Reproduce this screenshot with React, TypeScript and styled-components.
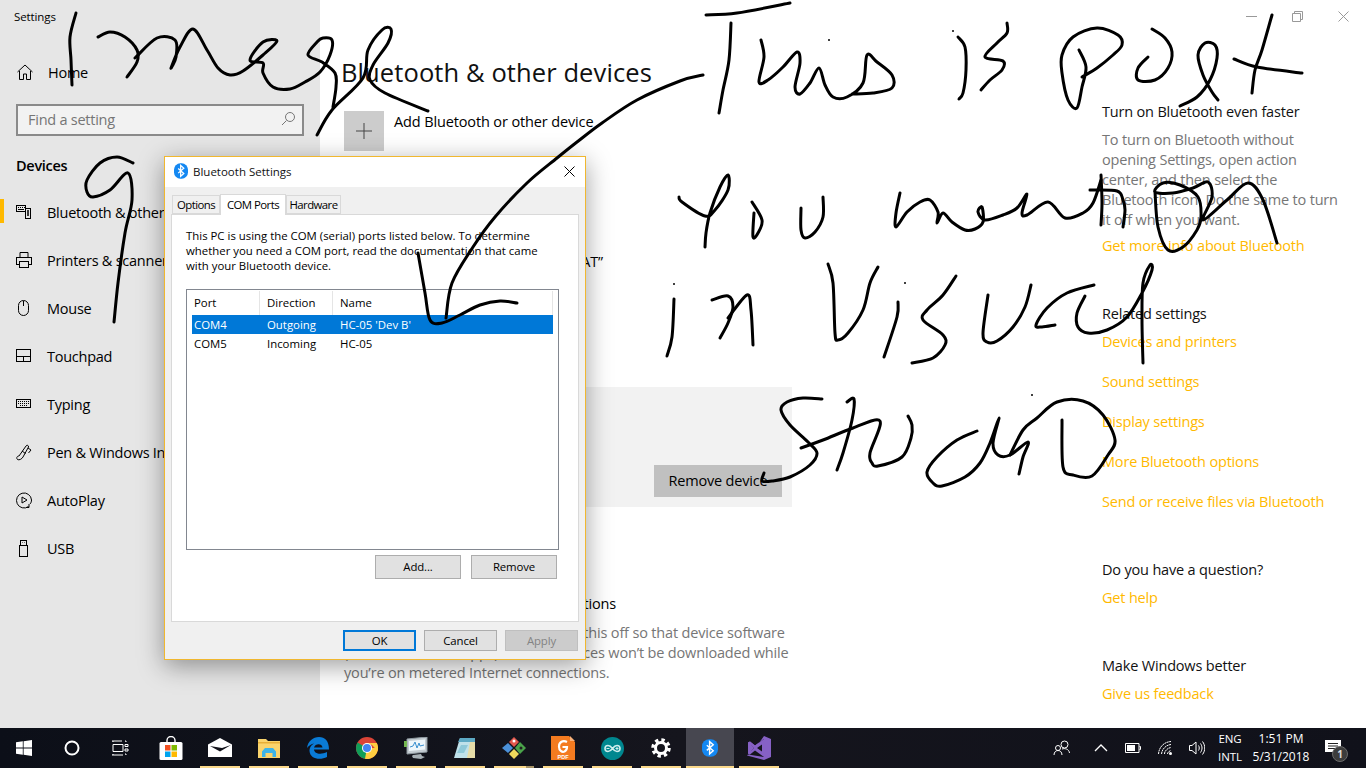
import React from "react";
import styled, { createGlobalStyle } from "styled-components";

const FONT = `"Open Sans", "Noto Sans", "Liberation Sans", sans-serif`;
const ACCENT = "#ffb900";

const Global = createGlobalStyle`
  html, body { margin: 0; padding: 0; background: #fff; }
  body { font-family: ${FONT}; color: #000; }
  * { box-sizing: border-box; }
`;

const Page = styled.div`position: relative; width: 1366px; height: 768px; overflow: hidden; display: flex; flex-direction: column;`;
const Desktop = styled.div`display: flex; height: 728px; flex: none;`;

/* ---------- sidebar ---------- */
const Sidebar = styled.aside`width: 320px; flex: none; background: #e6e6e6; display: flex; flex-direction: column;`;
const AppTitle = styled.div`font-size: 11.5px; line-height: 16px; padding: 9px 0 0 14px; height: 48px; letter-spacing: -0.1px;`;
const HomeRow = styled.div`height: 48px; display: flex; align-items: center; padding-left: 17px; font-size: 14.5px; letter-spacing: -0.25px; gap: 15px;`;
const SearchBox = styled.div`margin: 8px 16px 0; height: 32px; border: 2px solid #8a8a8a; background: #f2f2f2; display: flex; align-items: center; justify-content: space-between; padding: 0 6px 2px 10px; color: #767676; font-size: 14.5px; letter-spacing: -0.25px;`;
const GroupTitle = styled.div`margin: 19px 0 0 16px; height: 22px; line-height: 22px; font-size: 14.5px; font-weight: 600; letter-spacing: -0.3px;`;
const NavList = styled.nav`margin-top: 11px; display: flex; flex-direction: column;`;
const NavItem = styled.div<{ $on?: boolean }>`
  position: relative; height: 48px; display: flex; align-items: center; padding-left: 16px; gap: 15px; font-size: 14.5px; letter-spacing: -0.25px; white-space: nowrap;
  &::before { content: ""; display: ${p => (p.$on ? "block" : "none")}; position: absolute; left: 0; top: 11px; width: 4px; height: 24px; background: ${ACCENT}; }
`;
const NavIcon = styled.svg`width: 16px; height: 18px; flex: none; fill: none; stroke: #000; stroke-width: 1;`;
const SearchIcon = styled(NavIcon)`stroke: #767676;`;

/* ---------- main ---------- */
const Main = styled.main`flex: 1; background: #fff; display: flex; flex-direction: column; min-width: 0;`;
const WindowBar = styled.div`height: 32px; display: flex; justify-content: flex-end; flex: none;`;
const WinButton = styled.div`width: 46px; height: 32px; display: flex; align-items: center; justify-content: center;`;
const Columns = styled.div`display: flex; flex: 1; min-height: 0;`;
const Content = styled.div`width: 782px; flex: none; padding-left: 22px;`;
const Rail = styled.div`flex: 1; padding-top: 70px; font-size: 14.5px; letter-spacing: -0.18px;`;

const Heading = styled.h1`margin: 18px 0 0 -1px; font-weight: 400; font-size: 25.5px; line-height: 44px; letter-spacing: 0.1px; color: #111;`;
const AddRow = styled.div`display: flex; gap: 10px; margin: 17px 0 0 2px; height: 40px; font-size: 14.5px; letter-spacing: -0.13px; line-height: 22px;`;
const AddTile = styled.div`width: 40px; height: 40px; background: #cccccc; display: flex; align-items: center; justify-content: center;`;
const Discover = styled.div`margin: 100px 0 0 2px; width: 259px; display: flex; justify-content: flex-end; height: 22px; line-height: 22px; font-size: 14.5px; letter-spacing: -0.15px; white-space: nowrap;`;
const DevicePanel = styled.div`margin: 114px 0 0 2px; width: 448px; height: 120px; background: #f2f2f2; display: flex; justify-content: flex-end; align-items: flex-end; padding: 0 10px 10px 0;`;
const RemoveDevice = styled.div`width: 128px; height: 32px; background: #c0c0c0; font-size: 14.5px; letter-spacing: -0.2px; padding-bottom: 2px; display: flex; align-items: center; justify-content: center;`;
const MeterTitle = styled.div`margin: 86px 0 0 2px; width: 272px; display: flex; justify-content: flex-end; height: 22px; line-height: 22px; font-size: 14.5px; letter-spacing: -0.15px; white-space: nowrap;`;
const MeterText = styled.p`margin: 8px 0 0 2px; width: 448px; font-size: 14.5px; line-height: 20px; letter-spacing: -0.17px; color: #767676; white-space: nowrap;`;

const RailTitle = styled.div<{ $gap: number }>`margin-top: ${p => p.$gap}px; height: 20px; line-height: 20px; color: #111;`;
const RailText = styled.p`margin: 8px 0 0; line-height: 20px; color: #767676; white-space: nowrap;`;
const RailLink = styled.div<{ $gap: number }>`margin-top: ${p => p.$gap}px; height: 20px; line-height: 20px; color: ${ACCENT}; white-space: nowrap;`;

/* ---------- dialog ---------- */
const Dialog = styled.div`
  position: absolute; left: 164px; top: 156px; width: 422px; height: 504px; background: #f0f0f0; border: 1px solid #f0b72f;
  box-shadow: 0 6px 24px rgba(0,0,0,.38); display: flex; flex-direction: column; font-size: 11.4px; color: #000;
`;
const DialogTitle = styled.div`height: 30px; background: #fff; display: flex; align-items: center; padding: 0 10px 2px 9px; gap: 5px; font-size: 11.5px; flex: none; color: #111;`;
const TitleText = styled.span`flex: 1;`;
const TabStrip = styled.div`display: flex; align-items: flex-end; height: 27px; padding-left: 7px; flex: none;`;
const Tab = styled.div<{ $on?: boolean; $w: number }>`
  width: ${p => p.$w}px; height: ${p => (p.$on ? 21 : 19)}px; margin-bottom: ${p => (p.$on ? -1 : 0)}px; position: relative; z-index: ${p => (p.$on ? 2 : 1)};
  background: ${p => (p.$on ? "#fff" : "#f0f0f0")}; border: 1px solid #d9d9d9; border-bottom: ${p => (p.$on ? "none" : "1px solid #d9d9d9")};
  display: flex; align-items: center; justify-content: center; padding-bottom: 1px; white-space: nowrap; letter-spacing: -0.55px;
`;
const TabPanel = styled.div`margin: 0 6px 0 6px; height: 408px; background: #fff; border: 1px solid #d9d9d9; padding: 13px 20px 0 14px; flex: none; display: flex; flex-direction: column;`;
const Intro = styled.p`margin: 0; line-height: 15px; white-space: nowrap;`;
const ListView = styled.div`margin-top: 16px; height: 261px; width: 373px; border: 1px solid #828790; padding: 1px 5px 0 5px;`;
const ListHead = styled.div`display: grid; grid-template-columns: 68px 73px 220px; height: 24px; align-items: center;`;
const HeadCell = styled.div`height: 24px; line-height: 23px; padding-left: 7px; border-right: 1px solid #e5e5e5; &:first-child { padding-left: 2px; }`;
const ListRow = styled.div<{ $on?: boolean }>`
  display: grid; grid-template-columns: 68px 73px 220px; height: 19px; line-height: 19px; width: 361px;
  background: ${p => (p.$on ? "#0078d7" : "transparent")}; color: ${p => (p.$on ? "#fff" : "#000")};
`;
const Cell = styled.div`padding-left: 7px; &:first-child { padding-left: 2px; }`;
const ListButtons = styled.div`display: flex; justify-content: flex-end; gap: 10px; margin-top: 5px; width: 371px;`;
const PanelButton = styled.div<{ $w: number }>`width: ${p => p.$w}px; height: 24px; background: #e1e1e1; border: 1px solid #adadad; padding-bottom: 2px; letter-spacing: -0.12px; display: flex; align-items: center; justify-content: center;`;
const DialogFoot = styled.div`display: flex; justify-content: flex-end; gap: 8px; padding: 8px 7px 0 0;`;
const FootButton = styled.div<{ $kind?: "default" | "disabled" }>`
  width: 73px; height: 21px; display: flex; align-items: center; justify-content: center; letter-spacing: -0.12px;
  background: ${p => (p.$kind === "disabled" ? "#cccccc" : "#e1e1e1")};
  color: ${p => (p.$kind === "disabled" ? "#838383" : "#000")};
  border: ${p => (p.$kind === "default" ? "2px solid #0078d7" : p.$kind === "disabled" ? "1px solid #bfbfbf" : "1px solid #adadad")};
`;

/* ---------- ink ---------- */
const InkLayer = styled.svg`position: absolute; left: 0; top: 0; width: 1366px; height: 728px; pointer-events: none; fill: none; stroke: #000; stroke-width: 3; stroke-linecap: round; stroke-linejoin: round;`;

/* ---------- taskbar ---------- */
const Taskbar = styled.footer`height: 40px; flex: none; display: flex; background: linear-gradient(90deg, #0c0f18, #15151d 50%, #10111a); color: #fff;`;
const TaskLeft = styled.div`display: flex; flex: 1;`;
const ShellButton = styled.div<{ $gap?: number }>`width: 48px; height: 40px; display: flex; align-items: center; justify-content: center; margin-right: ${p => p.$gap || 0}px;`;
const AppButton = styled.div<{ $running?: boolean; $active?: boolean; $split?: boolean }>`
  position: relative; width: 48px; height: 40px; margin-right: 1px; display: flex; align-items: center; justify-content: center;
  background: ${p => (p.$active ? "#474750" : "transparent")};
  &::after { content: ""; display: ${p => (p.$running ? "block" : "none")}; position: absolute; bottom: 0; left: ${p => (p.$active ? 0 : 4)}px; right: ${p => (p.$active ? 0 : 4)}px; height: 2px;
    background: ${p => (p.$split ? "linear-gradient(90deg,#fbd98b 80%,#a89468 80%)" : "#fbd98b")}; }
`;
const Tray = styled.div`display: flex; flex: none; padding-right: 14px;`;
const TraySlot = styled.div<{ $w: number }>`position: relative; width: ${p => p.$w}px; height: 40px; display: flex; flex-direction: column; align-items: center; justify-content: center; font-size: 11.5px; line-height: 18px; letter-spacing: -0.1px; white-space: nowrap;`;
const ClockSlot = styled(TraySlot)`font-size: 12px; letter-spacing: 0;`;
const NoteGlyph = styled.svg`position: absolute; left: 11px; top: 12px;`;
const Badge = styled.div`position: absolute; left: 18px; top: 18px; width: 16px; height: 16px; border-radius: 50%; background: #3c3c3c; border: 1px solid #6b6b6b; font-size: 10px; font-weight: 700; line-height: 14px; text-align: center; color: #ddd;`;

/* ---------- data ---------- */
type P = [number, number];
const smooth = (pts: P[]) => {
  let d = `M${pts[0][0]} ${pts[0][1]}`;
  for (let i = 0; i < pts.length - 1; i++) {
    const a = pts[Math.max(0, i - 1)], b = pts[i], c = pts[i + 1], e = pts[Math.min(pts.length - 1, i + 2)];
    d += ` C${(b[0] + (c[0] - a[0]) / 6).toFixed(1)} ${(b[1] + (c[1] - a[1]) / 6).toFixed(1)} ${(c[0] - (e[0] - b[0]) / 6).toFixed(1)} ${(c[1] - (e[1] - b[1]) / 6).toFixed(1)} ${c[0]} ${c[1]}`;
  }
  return d;
};
const strokes: P[][] = [
  [[76,13],[70,37],[71,60],[72,85]],
  [[98,37],[110,32],[125,37],[137,50],[137,62],[127,77]],
  [[135,58],[157,38],[175,40],[176,57],[171,68],[180,47],[193,29],[207,50],[218,68],[230,75],[243,71],[263,55],[277,41],[263,42],[250,60],[263,63],[263,73],[273,87],[290,89],[305,82],[320,72],[330,55],[332,40],[323,38],[317,42],[308,55],[322,62],[335,73],[336,87],[333,107]],
  [[317,135],[332,110],[363,78],[368,50],[382,30],[391,29],[388,43],[373,65],[370,80],[385,93],[428,111]],
  [[703,75],[680,81],[637,100],[602,123],[577,142],[557,158],[527,183],[495,217],[473,247],[452,283],[446,318]],
  [[418,253],[425,293],[430,320],[442,323],[460,315],[480,305],[500,301],[517,303]],
  [[706,15],[737,13],[790,3]],
  [[731,23],[729,60],[723,90],[719,113]],
  [[761,40],[764,57],[759,82],[768,80],[783,67],[797,52],[800,63],[795,87],[800,94],[810,83],[819,68],[825,85],[833,97],[847,97],[863,83],[867,55],[877,62],[892,75],[892,88],[873,93],[852,94]],
  [[958,37],[965,47],[966,70],[963,93],[959,99]],
  [[1007,23],[1007,33],[997,43],[985,57],[1003,61],[1002,70],[990,80],[981,90]],
  [[1079,50],[1086,67],[1082,87],[1077,108],[1068,100],[1062,73],[1062,55],[1073,37],[1097,28],[1118,35],[1122,45],[1113,55],[1097,68],[1082,77]],
  [[1152,29],[1165,38],[1172,52],[1168,68],[1155,80],[1138,80],[1138,68],[1148,57]],
  [[1180,106],[1197,97],[1210,80],[1217,58],[1215,45],[1205,43],[1198,55],[1203,75],[1212,92],[1218,100]],
  [[1272,15],[1262,50],[1255,70],[1252,93]],
  [[1234,59],[1257,67],[1302,73]],
  [[679,197],[682,202],[705,216],[715,210],[728,190],[728,175],[720,187],[710,213],[706,233],[705,247]],
  [[752,202],[762,220],[758,233],[753,237],[754,213]],
  [[801,208],[801,230],[805,238],[815,232],[823,217],[823,197]],
  [[900,193],[896,213],[896,227],[907,212],[920,202],[930,200],[938,212],[937,223],[943,213],[952,222],[965,230],[975,229],[983,222],[982,207],[978,212],[985,220],[1003,215],[1017,208],[1027,194],[1022,213],[1027,215],[1048,202],[1065,218],[1083,213],[1093,203],[1101,180]],
  [[1101,175],[1102,203],[1101,225]],
  [[1090,190],[1117,191],[1123,200],[1125,210],[1123,227]],
  [[1155,192],[1158,227],[1168,250],[1183,247],[1197,230],[1201,217],[1198,197],[1180,185],[1163,183],[1155,192],[1173,193],[1193,188],[1208,182],[1212,197],[1203,220],[1227,200],[1248,183],[1263,200],[1277,243]],
  [[674,299],[672,337],[667,356]],
  [[712,300],[728,296],[733,307],[728,323],[720,338]],
  [[728,318],[747,295],[751,310],[753,345]],
  [[828,264],[833,283],[835,333],[838,340],[848,333],[863,310],[870,283],[878,267]],
  [[898,302],[897,317],[884,357]],
  [[956,276],[943,295],[927,310],[923,320],[943,335],[945,345],[933,358],[912,363]],
  [[988,295],[983,333],[987,342],[997,341],[1013,327],[1025,307],[1031,285]],
  [[1094,285],[1067,293],[1047,308],[1036,325],[1042,327],[1055,325]],
  [[1085,296],[1077,313],[1078,327],[1088,333],[1107,330],[1127,317],[1142,293],[1152,270],[1150,265],[1143,283],[1142,320],[1143,363]],
  [[822,399],[803,398],[787,402],[781,410],[790,425],[808,442],[817,453],[810,465],[790,477],[772,481],[762,481],[764,473]],
  [[847,402],[854,399],[852,420],[843,453],[837,470]],
  [[801,448],[823,440],[853,428],[880,421],[870,453],[872,463],[878,466],[902,457],[911,438],[912,425],[908,416]],
  [[977,431],[957,440],[937,457],[927,472],[933,483],[942,486],[965,477],[980,463],[990,443],[999,418],[993,443],[998,455],[1010,455],[1028,442],[1023,457],[1019,474]],
  [[1010,455],[1023,430],[1037,418],[1057,402],[1083,401],[1103,415],[1115,440],[1108,455],[1092,476],[1073,475],[1063,467],[1062,420]],
  [[133,163],[117,157],[100,163],[87,180],[87,192],[93,197],[110,190],[128,173],[132,200],[125,233],[118,283],[114,322]],
];
const dots: P[] = [[829,40],[953,31],[674,284],[905,283],[1032,395]];

const navIcons: Record<string, React.ReactNode> = {
  bt: <><rect x="0.5" y="2.5" width="9" height="6" /><path d="M2 4.5h1M4 4.5h1M6 4.5h1M8 4.5h1M2 6.5h6" /><rect x="9.5" y="5.5" width="5" height="10" fill="#e6e6e6" /><path d="M11 8h2M11 10h2M11 12h2" strokeWidth="1.5" /></>,
  printer: <><path d="M4 6V1.5h8V6" /><rect x="0.5" y="6.5" width="15" height="7" /><rect x="3.5" y="10.5" width="9" height="6" fill="#e6e6e6" /></>,
  mouse: <><rect x="2.5" y="1.5" width="10" height="15" rx="5" /><path d="M7.5 2v5" /></>,
  touchpad: <><rect x="0.5" y="2.5" width="14" height="12" /><path d="M0.5 9.5h14M7.5 9.5v5" /></>,
  typing: <><rect x="0.5" y="4.5" width="14" height="8" /><path d="M2 6.5h11M2 8.5h11M4 10.5h7" strokeDasharray="1 1" /></>,
  pen: <><path d="M1.500 16.500C0 15 1 13 3 13l7-10c1-1.500 3-.5 2.500 1L7 14c-1 2-4 3.500-5.500 2.500zM6 8l3.500 2.500M12 5l3 2-2.500 3" /></>,
  autoplay: <><path d="M12.500 15.500A7.500 7.500 0 1 1 15.500 9c0 1.500-.5 3-1.500 4M13 13v3.500M13 16.500h-3" /><path d="M6 6l5 3-5 3z" /></>,
  usb: <><rect x="3.500" y="6.500" width="8" height="11" /><rect x="4.500" y="1.500" width="6" height="5" /><path d="M6.500 3.500h.5M8.500 3.500h.5" /></>,
};
const navItems: { key: string; label: string; on?: boolean }[] = [
  { key: "bt", label: "Bluetooth & other devices", on: true },
  { key: "printer", label: "Printers & scanners" },
  { key: "mouse", label: "Mouse" },
  { key: "touchpad", label: "Touchpad" },
  { key: "typing", label: "Typing" },
  { key: "pen", label: "Pen & Windows Ink" },
  { key: "autoplay", label: "AutoPlay" },
  { key: "usb", label: "USB" },
];

const BtRune = ({ c = "#fff" }: { c?: string }) => (
  <path d="M6 7.500l8 7-4.500 4V3l4.500 4-8 7" fill="none" stroke={c} strokeWidth="1.800" />
);
const apps: { key: string; running?: boolean; active?: boolean; split?: boolean; icon: React.ReactNode }[] = [
  { key: "store", icon: <svg width="24" height="24" viewBox="0 0 24 24"><path d="M8 7V4.500a4 4 0 0 1 8 0V7" fill="none" stroke="#fff" strokeWidth="1.400" /><rect x="0.500" y="6" width="23" height="18" rx="1.500" fill="#fff" /><rect x="6" y="9" width="5.500" height="5.500" fill="#f25022" /><rect x="12.500" y="9" width="5.500" height="5.500" fill="#7fba00" /><rect x="6" y="15.500" width="5.500" height="5.500" fill="#00a4ef" /><rect x="12.500" y="15.500" width="5.500" height="5.500" fill="#ffb900" /></svg> },
  { key: "mail", running: true, icon: <svg width="24" height="20" viewBox="0 0 24 20"><path d="M0 6.500L12 0l12 6.500V19H0z" fill="#fff" /><path d="M2 8l10 5.500L23 7l-9 3z" fill="#12121a" /><path d="M0 8l12 6.500-12 4.500z" fill="#fff" /></svg> },
  { key: "explorer", running: true, icon: <svg width="22" height="20" viewBox="0 0 22 20"><path d="M0 1h8l2 2h12v17H0z" fill="#f9d36c" /><path d="M0 4h22v1.500H0z" fill="#e6ae37" /><path d="M4 19v-5.500L7 10h8l3 3.500V19h-3.500v-4h-7v4z" fill="#3cb4e8" /></svg> },
  { key: "edge", running: true, icon: <svg width="22" height="22" viewBox="0 0 22 22"><path d="M0 11C1 4 6 0 12 0c6 0 10 4 10 12.500H7c.3 4.500 7 5.500 13 2.500v5c-7 3.500-17 2-17.500-6C2.300 11.500 3.500 8.500 7 6.500 4.500 7 2 8.500 0 11zm7-.5h8.500C15.300 6 8 6 7 10.500z" fill="#0a7bd6" /></svg> },
  { key: "chrome", running: true, icon: <svg width="22" height="22" viewBox="0 0 22 22"><circle cx="11" cy="11" r="11" fill="#db4437" /><path d="M11 11L1.500 5.500A11 11 0 0 0 11 22l5.500-9z" fill="#0f9d58" /><path d="M11 11h11A11 11 0 0 1 9 21.800z" fill="#ffcd40" /><path d="M11 6h9.800a11 11 0 0 1 .800 8L16 8z" fill="#ffcd40" /><circle cx="11" cy="11" r="5" fill="#fff" /><circle cx="11" cy="11" r="4" fill="#4285f4" /></svg> },
  { key: "perf", running: true, icon: <svg width="24" height="22" viewBox="0 0 24 22"><path d="M3 2l20-2v15L3 17z" fill="#c4ccd2" stroke="#8d979e" /><path d="M5 4l16-1.500v10L5 14z" fill="#eef6fb" /><path d="M6 10l3-1 2-4 2 6 2-5 1 3 4-1" fill="none" stroke="#3a90d0" strokeWidth="1" /><path d="M9 18l8-1 1 2 3 1-4 2-8-1-1-2z" fill="#a7b0b6" /><rect x="0" y="4" width="3" height="6" fill="#76b852" /></svg> },
  { key: "note", running: true, icon: <svg width="22" height="24" viewBox="0 0 22 24"><path d="M6 2h15v20H0z" fill="#bfe1ea" /><path d="M6 2h15v4H4z" fill="#5da9c4" /><path d="M16 6h5v16h-8z" fill="#e6dca8" /><path d="M3 17l4-8h7l-4 8z" fill="#8fc9d9" /></svg> },
  { key: "git", running: true, split: true, icon: <svg width="24" height="24" viewBox="0 0 24 24"><path d="M12 1l5 5-5 5-5-5z" fill="#e2574c" /><path d="M18 6l6 6-6 6-5-6z" fill="#4aa34a" /><path d="M12 13l5 5-5 5-5-5z" fill="#f0d95c" /><path d="M6 7l5 5-5 5-6-5z" fill="#4b90d8" /><circle cx="12" cy="5" r="1.500" fill="#fff" /><circle cx="19" cy="12" r="1.500" fill="#222" /></svg> },
  { key: "foxit", running: true, icon: <svg width="24" height="24" viewBox="0 0 24 24"><path d="M0 0h18l6 6v18H0z" fill="#f47b20" /><path d="M19 0l5 5h-5z" fill="#f9b27a" /><path d="M16 6c-4-2-8 0-8 4.500 0 4 3 6 5.500 5 2-1 2.500-2.500 2.500-4.500h-4.500" fill="none" stroke="#fff" strokeWidth="2.200" /><text x="12" y="22.500" fontSize="5.500" fontWeight="700" fill="#fff" textAnchor="middle" fontFamily="Liberation Sans, sans-serif">PDF</text></svg> },
  { key: "arduino", running: true, icon: <svg width="23" height="23" viewBox="0 0 23 23"><circle cx="11.500" cy="11.500" r="11.500" fill="#00878f" /><path d="M11.500 11.500c-1.500-2-3-3-4.500-3a3 3 0 0 0 0 6c1.500 0 3-1 4.500-3 1.500-2 3-3 4.500-3a3 3 0 0 1 0 6c-1.500 0-3-1-4.500-3z" fill="none" stroke="#cfeeee" strokeWidth="1.600" /><path d="M5.500 11.500h3M14.500 11.500h3M16 10v3" stroke="#cfeeee" strokeWidth="1" /></svg> },
  { key: "gear", running: true, icon: <svg width="20" height="20" viewBox="0 0 20 20"><circle cx="10" cy="10" r="5.500" fill="none" stroke="#fff" strokeWidth="3" /><circle cx="10" cy="10" r="8" fill="none" stroke="#fff" strokeWidth="3.500" strokeDasharray="3.300 3" /></svg> },
  { key: "bt", running: true, active: true, icon: <svg width="16" height="22" viewBox="0 0 20 22"><rect x="0" y="0" width="20" height="22" rx="9" fill="#1488f2" /><BtRune /></svg> },
  { key: "vs", running: true, icon: <svg width="24" height="24" viewBox="0 0 24 24"><path d="M17 0l7 3v18l-7 3L0 19.500l1-1 16 2.500V3L8 9.500 3 5.500 1 6.500v11l2 1v-2L7 12 3 8l5 4.500z" fill="#8661c5" /><path d="M1 6.500l2-1 5 4L17 3v18L8 14.500 3 18.500l-2-1zM4 9v6l3-3zM10 12l5 3.500v-7z" fill="#8661c5" fillRule="evenodd" /></svg> },
];

const Line = styled.span`display: block; line-height: 18px;`;
const SmallGlyph = styled.svg`display: block; fill: none; stroke: #fff; stroke-width: 1;`;

export default function App() {
  return (
    <>
      <Global />
      <Page>
        <Desktop>
          <Sidebar>
            <AppTitle>Settings</AppTitle>
            <HomeRow>
              <NavIcon viewBox="0 0 16 18"><path d="M0.500 9L8 2l7.500 7M2.500 8v8.500h4V11h3v5.500h4V8" /></NavIcon>
              Home
            </HomeRow>
            <SearchBox>
              Find a setting
              <SearchIcon viewBox="0 0 16 18"><circle cx="10" cy="7" r="4.500" /><path d="M6.500 10.500L2 15" /></SearchIcon>
            </SearchBox>
            <GroupTitle>Devices</GroupTitle>
            <NavList>
              {navItems.map(n => (
                <NavItem key={n.key} $on={n.on}>
                  <NavIcon viewBox="0 0 16 18">{navIcons[n.key]}</NavIcon>
                  {n.label}
                </NavItem>
              ))}
            </NavList>
          </Sidebar>
          <Main>
            <WindowBar>
              <WinButton><svg width="11" height="11" viewBox="0 0 11 11" stroke="#999" fill="none"><path d="M0 5.500h11" /></svg></WinButton>
              <WinButton><svg width="11" height="11" viewBox="0 0 11 11" stroke="#999" fill="none"><path d="M2.500 2.500V.500h8v8h-2M.500 2.500h8v8h-8z" /></svg></WinButton>
              <WinButton><svg width="11" height="11" viewBox="0 0 11 11" stroke="#999" fill="none"><path d="M.500.500l10 10M10.500.500l-10 10" /></svg></WinButton>
            </WindowBar>
            <Columns>
              <Content>
                <Heading>Bluetooth &amp; other devices</Heading>
                <AddRow>
                  <AddTile><svg width="16" height="16" viewBox="0 0 16 16" stroke="#444" fill="none"><path d="M8 0v16M0 8h16" /></svg></AddTile>
                  Add Bluetooth or other device
                </AddRow>
                <Discover>Now discoverable as “DESKTOP-7KQ2VAT”</Discover>
                <DevicePanel><RemoveDevice>Remove device</RemoveDevice></DevicePanel>
                <MeterTitle>Download over metered connections</MeterTitle>
                <MeterText>
                  To help prevent extra charges, keep this off so that device software<br />
                  (drivers, info, and apps) for new devices won’t be downloaded while<br />
                  you’re on metered Internet connections.
                </MeterText>
              </Content>
              <Rail>
                <RailTitle $gap={0}>Turn on Bluetooth even faster</RailTitle>
                <RailText>
                  To turn on Bluetooth without<br />opening Settings, open action<br />center, and then select the<br />Bluetooth icon. Do the same to turn<br />it off when you want.
                </RailText>
                <RailLink $gap={6}>Get more info about Bluetooth</RailLink>
                <RailTitle $gap={48}>Related settings</RailTitle>
                <RailLink $gap={8}>Devices and printers</RailLink>
                <RailLink $gap={20}>Sound settings</RailLink>
                <RailLink $gap={20}>Display settings</RailLink>
                <RailLink $gap={20}>More Bluetooth options</RailLink>
                <RailLink $gap={20}>Send or receive files via Bluetooth</RailLink>
                <RailTitle $gap={48}>Do you have a question?</RailTitle>
                <RailLink $gap={8}>Get help</RailLink>
                <RailTitle $gap={48}>Make Windows better</RailTitle>
                <RailLink $gap={8}>Give us feedback</RailLink>
              </Rail>
            </Columns>
          </Main>
        </Desktop>

        <Taskbar>
          <TaskLeft>
            <ShellButton><svg width="16" height="16" viewBox="0 0 16 16" fill="#fff"><path d="M0 2.300l6.800-1v6.300H0zM7.600 1.200L16 0v7.600H7.600zM0 8.400h6.800v6.300l-6.800-1zM7.600 8.400H16V16l-8.400-1.200z" /></svg></ShellButton>
            <ShellButton><svg width="16" height="16" viewBox="0 0 16 16" fill="none" stroke="#fff" strokeWidth="2"><circle cx="8" cy="8" r="6.500" /></svg></ShellButton>
            <ShellButton $gap={3}><svg width="17" height="16" viewBox="0 0 17 16" fill="none" stroke="#fff"><path d="M1 1v1M1 14v1M0 1h10M0 15h11M1 4.500h10v7H1zM13 1h1v1M13 4.500h3v2h-3zM13 9h3v2h-3zM13 14h1v1" /></svg></ShellButton>
            {apps.map(a => (
              <AppButton key={a.key} $running={a.running} $active={a.active} $split={a.split}>{a.icon}</AppButton>
            ))}
          </TaskLeft>
          <Tray>
            <TraySlot $w={44}><SmallGlyph width="18" height="16" viewBox="0 0 18 16"><circle cx="11.500" cy="4.500" r="3.500" /><circle cx="5" cy="8" r="2.500" /><path d="M1 15c0-3 2-4.500 4-4.500S9 12 9 15M9 9c3-1 7 0 7.500 4" /></SmallGlyph></TraySlot>
            <TraySlot $w={34}><SmallGlyph width="14" height="8" viewBox="0 0 14 8"><path d="M1 7l6-6 6 6" strokeWidth="1.300" /></SmallGlyph></TraySlot>
            <TraySlot $w={30}><SmallGlyph width="16" height="10" viewBox="0 0 16 10"><path d="M.500.500h13.500v9H.500zM14.500 3.500h1v3h-1" /><rect x="2" y="2" width="8" height="6" fill="#fff" stroke="none" /></SmallGlyph></TraySlot>
            <TraySlot $w={34}><SmallGlyph width="14" height="14" viewBox="0 0 14 14"><path d="M.500 13C1 6 6 1 13 .500M3.500 13C4 8 8 4 13 3.500M6.500 13c0-3 3-6 6.500-6.500M9.500 13c0-1.500 1.500-3 3.500-3.500" strokeDasharray="2 .5" /><circle cx="12.500" cy="12.500" r="1.500" fill="#fff" stroke="none" /></SmallGlyph></TraySlot>
            <TraySlot $w={30}><SmallGlyph width="16" height="14" viewBox="0 0 16 14"><path d="M.500 4.500h2.500l4-3.500v12l-4-3.500H.500zM9.500 4.500c1 1.500 1 3.500 0 5M11.500 2.500c2 3 2 6 0 9M13.500.500c3 4 3 9 0 13" /></SmallGlyph></TraySlot>
            <TraySlot $w={36}><Line>ENG</Line><Line>INTL</Line></TraySlot>
            <ClockSlot $w={66}><Line>1:51 PM</Line><Line>5/31/2018</Line></ClockSlot>
            <TraySlot $w={38}>
              <NoteGlyph width="16" height="15" viewBox="0 0 16 15"><path d="M0 0h16v12h-3v3l-4-3H0z" fill="#fff" /><path d="M3 3.500h10M3 6h10M3 8.500h7" stroke="#222" /></NoteGlyph>
              <Badge>1</Badge>
            </TraySlot>
          </Tray>
        </Taskbar>

        <Dialog>
          <DialogTitle>
            <svg width="14" height="16" viewBox="0 0 20 22"><rect width="20" height="22" rx="9" fill="#1488f2" /><BtRune /></svg>
            <TitleText>Bluetooth Settings</TitleText>
            <svg width="11" height="11" viewBox="0 0 11 11" stroke="#000" fill="none"><path d="M.500.500l10 10M10.500.500l-10 10" /></svg>
          </DialogTitle>
          <TabStrip>
            <Tab $w={48}>Options</Tab>
            <Tab $w={66} $on>COM Ports</Tab>
            <Tab $w={55}>Hardware</Tab>
          </TabStrip>
          <TabPanel>
            <Intro>
              This PC is using the COM (serial) ports listed below. To determine<br />
              whether you need a COM port, read the documentation that came<br />
              with your Bluetooth device.
            </Intro>
            <ListView>
              <ListHead>
                <HeadCell>Port</HeadCell>
                <HeadCell>Direction</HeadCell>
                <HeadCell>Name</HeadCell>
              </ListHead>
              <ListRow $on><Cell>COM4</Cell><Cell>Outgoing</Cell><Cell>HC-05 'Dev B'</Cell></ListRow>
              <ListRow><Cell>COM5</Cell><Cell>Incoming</Cell><Cell>HC-05</Cell></ListRow>
            </ListView>
            <ListButtons>
              <PanelButton $w={86}>Add...</PanelButton>
              <PanelButton $w={86}>Remove</PanelButton>
            </ListButtons>
          </TabPanel>
          <DialogFoot>
            <FootButton $kind="default">OK</FootButton>
            <FootButton>Cancel</FootButton>
            <FootButton $kind="disabled">Apply</FootButton>
          </DialogFoot>
        </Dialog>

        <InkLayer viewBox="0 0 1366 728">
          {strokes.map((s, i) => <path key={i} d={smooth(s)} />)}
          {dots.map((d, i) => <circle key={i} cx={d[0]} cy={d[1]} r={1} fill="#000" stroke="none" />)}
        </InkLayer>
      </Page>
    </>
  );
}
